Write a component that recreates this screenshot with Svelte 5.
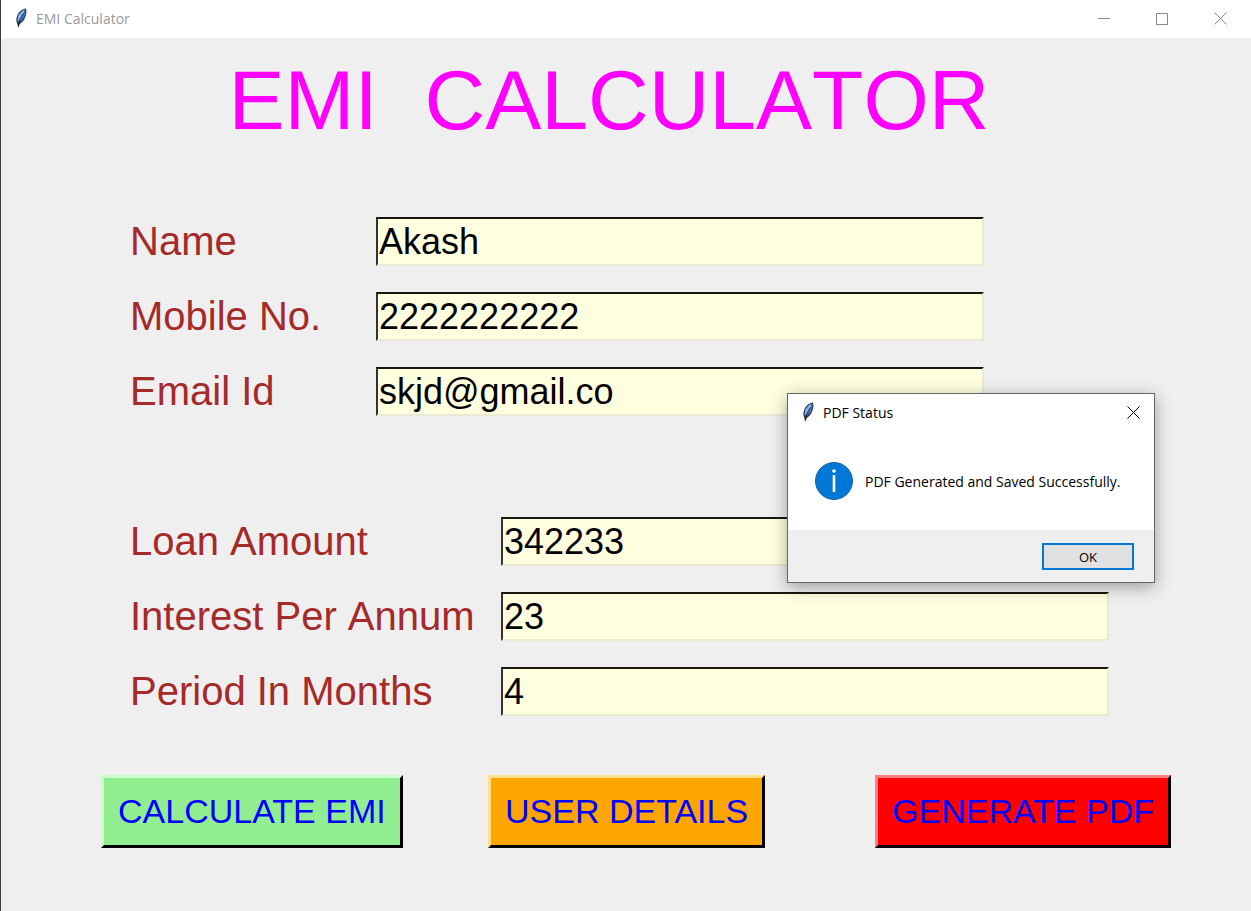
<script>
  let person = $state([
    { id: 'name', label: 'Name', value: 'Akash' },
    { id: 'mobile', label: 'Mobile No.', value: '2222222222' },
    { id: 'email', label: 'Email Id', value: 'skjd@gmail.co' }
  ]);
  let loan = $state([
    { id: 'amount', label: 'Loan Amount', value: '342233' },
    { id: 'interest', label: 'Interest Per Annum', value: '23' },
    { id: 'period', label: 'Period In Months', value: '4' }
  ]);
  let dialogOpen = $state(true);
</script>

{#snippet feather()}
  <svg class="feather" viewBox="0 0 12 20" width="12" height="20" aria-hidden="true">
    <path d="M11 .500C7.500.800 4 3.500 2.500 7C1 10.500 1 13 2.200 15.500L3.200 19.500L4.800 16C8 14 9.700 11 10.700 8C11.700 5 11.500 2.500 11 .500Z" fill="#22324c" />
    <path d="M10 1.500C7 2.300 4 5.500 3 8.500L2.500 13.500L4 13C6 10 8.800 6 10 1.500Z" fill="#86aee4" />
    <path d="M10.500 2C10.800 8 8.500 12 4.200 14.500C5.500 11 8.300 7 10.500 2Z" fill="#4473b8" />
    <path d="M8 6C6 9 4.200 13 3.300 19" stroke="#172338" stroke-width=".7" fill="none" />
  </svg>
{/snippet}

<div class="window">
  <header class="titlebar">
    {@render feather()}
    <span class="caption">EMI Calculator</span>
    <div class="controls">
      <button aria-label="Minimize"><svg width="13" height="13" viewBox="0 0 13 13"><path d="M0 6.500H12" /></svg></button>
      <button aria-label="Maximize"><svg width="13" height="13" viewBox="0 0 13 13"><path d="M.5 1.500H11.500V12.500H.5Z" /></svg></button>
      <button aria-label="Close"><svg width="13" height="13" viewBox="0 0 13 13"><path d="M.5.500L12.500 12.500M12.500.500L.5 12.500" /></svg></button>
    </div>
  </header>

  <main>
    <h1>EMI&nbsp; CALCULATOR</h1>

    <form onsubmit={(e) => e.preventDefault()}>
      <div class="group person">
        {#each person as field (field.id)}
          <div class="row">
            <label for={field.id}>{field.label}</label>
            <input id={field.id} type="text" spellcheck="false" bind:value={field.value} />
          </div>
        {/each}
      </div>
      <div class="group loan">
        {#each loan as field (field.id)}
          <div class="row">
            <label for={field.id}>{field.label}</label>
            <input id={field.id} type="text" spellcheck="false" bind:value={field.value} />
          </div>
        {/each}
      </div>
      <div class="actions">
        <button type="button" class="action green">CALCULATE EMI</button>
        <button type="button" class="action orange">USER DETAILS</button>
        <button type="button" class="action red" onclick={() => (dialogOpen = true)}>GENERATE PDF</button>
      </div>
    </form>
  </main>

  {#if dialogOpen}
    <div class="dialog" role="dialog" aria-labelledby="dialog-title">
      <div class="dialog-head">
        {@render feather()}
        <span id="dialog-title">PDF Status</span>
        <button class="dialog-close" aria-label="Close" onclick={() => (dialogOpen = false)}>
          <svg width="13" height="13" viewBox="0 0 13 13"><path d="M.5.500L12.500 12.500M12.500.500L.5 12.500" /></svg>
        </button>
      </div>
      <div class="dialog-body">
        <svg width="38" height="38" viewBox="0 0 38 38" aria-hidden="true">
          <circle cx="19" cy="19" r="18.500" fill="#0078d7" stroke="#1763a5" />
          <circle cx="19" cy="9" r="1.800" fill="#fff" />
          <path d="M19 13V30" stroke="#fff" stroke-width="2.600" />
        </svg>
        <span>PDF Generated and Saved Successfully.</span>
      </div>
      <div class="dialog-foot">
        <button class="ok" onclick={() => (dialogOpen = false)}>OK</button>
      </div>
    </div>
  {/if}
</div>

<style>
  :global(body) {
    background: #efefef;
  }
  * {
    box-sizing: border-box;
  }
  .window {
    position: relative;
    min-height: 100vh;
    border-left: 1px solid #3c3c40;
    background: #efefef;
    font-family: "Liberation Sans", Arial, sans-serif;
    font-kerning: none;
  }
  .titlebar {
    display: flex;
    align-items: center;
    height: 38px;
    padding: 0 2px 2px 14px;
    background: #fff;
    color: #999;
    font-family: "Open Sans", sans-serif;
    font-size: 14px;
  }
  .caption {
    margin-left: 9px;
  }
  .controls {
    display: flex;
    align-self: stretch;
    margin-left: auto;
  }
  .controls button,
  .dialog-close {
    display: grid;
    place-items: center;
    width: 58px;
    padding: 0;
    border: 0;
    background: none;
  }
  .controls path,
  .dialog-close path {
    fill: none;
    stroke: #888;
  }
  h1 {
    margin: 0;
    padding: 12px 34px 0 0;
    color: #f0f;
    font-size: 84px;
    font-weight: 400;
    line-height: 100px;
    text-align: center;
  }
  .group {
    display: grid;
    gap: 26px;
    padding: 0 20px 0 129px;
  }
  .person {
    margin-top: 67px;
  }
  .loan {
    margin-top: 101px;
  }
  .row {
    display: flex;
    align-items: center;
  }
  label {
    flex: none;
    width: 246px;
    color: #a52a2a;
    font-size: 40px;
    line-height: 49px;
    white-space: nowrap;
  }
  .loan label {
    width: 371px;
  }
  input {
    flex: 0 1 608px;
    min-width: 0;
    height: 49px;
    padding: 0 1px;
    border: 2px solid;
    border-color: #17170f #e9e9d4 #e9e9d4 #33332a;
    border-radius: 0;
    outline: 0;
    background: #ffffe0;
    color: #000;
    font-family: inherit;
    font-size: 36px;
  }
  .actions {
    display: grid;
    grid-template-columns: 1fr 1fr auto;
    justify-items: start;
    margin-top: 59px;
    padding: 0 80px 40px 100px;
  }
  .action {
    height: 73px;
    padding: 0 14px;
    border: 3px solid;
    color: #00f;
    font: 34px "Liberation Sans", Arial, sans-serif;
    white-space: nowrap;
  }
  .green {
    background: #90ee90;
    border-color: #c8ffc8 #000 #000 #c8ffc8;
  }
  .orange {
    background: #ffa500;
    border-color: #ffe08a #000 #000 #ffe08a;
  }
  .red {
    background: #f00;
    border-color: #ff8080 #000 #000 #ff8080;
  }
  .dialog {
    position: absolute;
    top: 393px;
    right: 96px;
    width: 368px;
    border: 1px solid #666;
    background: #fff;
    box-shadow: 0 4px 16px rgba(0, 0, 0, 0.35);
    color: #000;
    font-family: "Open Sans", sans-serif;
    font-size: 14px;
  }
  .dialog-head {
    display: flex;
    align-items: center;
    height: 36px;
    padding-left: 14px;
  }
  #dialog-title {
    margin-left: 9px;
  }
  .dialog-close {
    align-self: stretch;
    width: 42px;
    margin-left: auto;
  }
  .dialog-close path {
    stroke: #000;
  }
  .dialog-body {
    display: flex;
    align-items: center;
    gap: 12px;
    height: 100px;
    padding: 2px 27px 0;
    white-space: nowrap;
  }
  .dialog-foot {
    display: flex;
    justify-content: flex-end;
    padding: 13px 20px 12px;
    background: #efefef;
  }
  .ok {
    width: 92px;
    height: 27px;
    padding: 0;
    border: 2px solid #0078d7;
    background: #e1e1e1;
    color: #000;
    font: 13px "Open Sans", sans-serif;
  }
</style>
